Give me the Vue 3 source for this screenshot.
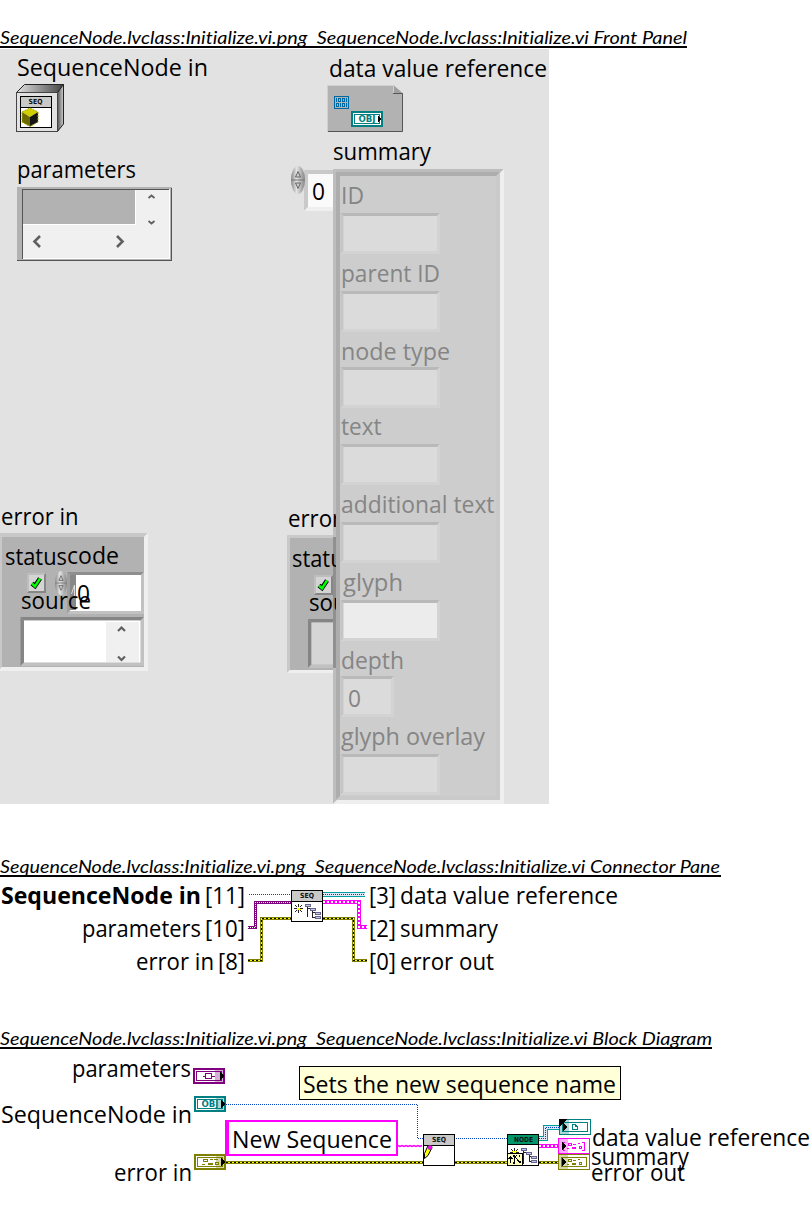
<script setup>
// Rows are [text, left, right, baseline]
const panelLabels = [
  ['SequenceNode in', 17, 208, 76.4],
  ['data value reference', 329, 547, 77.4],
  ['parameters', 17, 136, 178.4],
  ['summary', 333, 431, 160.4],
  ['error in', 1, 78.5, 525.4],
  ['status', 5, 67, 565],
  ['code', 67, 119, 564.4],
  ['0', 77, 90, 602.4],
  ['source', 21, 91, 609.4],
  ['0', 312, 325, 200.4]
]
const hiddenLabels = [
  ['error out', 288, 382, 527.4],
  ['status', 292, 354, 567.4],
  ['source', 309, 379, 611.4]
]
const clusterLabels = [
  ['ID', 341, 364, 204.4],
  ['parent ID', 341, 440, 282.4],
  ['node type', 341, 450, 360.4],
  ['text', 341, 381.5, 435.4],
  ['additional text', 341, 494.5, 513.4],
  ['glyph', 343, 403, 591.4],
  ['depth', 341, 404, 669.4],
  ['0', 348, 361, 707.4],
  ['glyph overlay', 341, 485, 745.4]
]
const connectorLabels = [
  ['[11]', 205, 245, 904.4],
  ['parameters', 82, 201, 937.4],
  ['[10]', 205, 245, 937.4],
  ['error in', 136, 214, 970.4],
  ['[8]', 218, 245, 970.4],
  ['[3]', 369, 396, 904.4],
  ['data value reference', 400, 618, 904.4],
  ['[2]', 369, 396, 937.4],
  ['summary', 400, 498, 937.4],
  ['[0]', 369, 396, 970.4],
  ['error out', 400, 494, 970.4]
]
const diagramLabels = [
  ['parameters', 72, 191, 1077.4],
  ['SequenceNode in', 1, 192, 1123.4],
  ['error in', 114, 192, 1181.4],
  ['Sets the new sequence name', 303, 616, 1093.4],
  ['New Sequence', 232, 392, 1148.4],
  ['data value reference', 592, 810, 1146.4],
  ['summary', 591, 689, 1165.4],
  ['error out', 591, 685, 1181.4]
]

// Bevelled frame: x, y, width, height, edge, top colour, bottom/right colour, fill, left colour
function frame(x, y, w, h, b, dark, light, fill, left = dark) {
  const r = x + w
  const d = y + h
  return {
    top: `${x},${y} ${r},${y} ${r - b},${y + b} ${x + b},${y + b}`,
    side: `${x},${y} ${x + b},${y + b} ${x + b},${d - b} ${x},${d}`,
    br: `${r},${y} ${r},${d} ${x},${d} ${x + b},${d - b} ${r - b},${d - b} ${r - b},${y + b}`,
    ix: x + b, iy: y + b, iw: w - 2 * b, ih: h - 2 * b, dark, light, fill, left
  }
}
const errorFrames = [
  frame(-2, 533, 150, 138, 4, '#c8c8c8', '#efefef', '#b2b2b2'),
  frame(27, 573, 19, 20, 2, '#bebebe', '#868686', '#d4d4d4'),
  frame(67, 572, 77, 42, 3, '#8f8f8f', '#c1c1c1', '#ffffff', '#a0a0a0'),
  frame(20.5, 617, 123.500, 49, 3.5, '#858585', '#c1c1c1', '#ffffff'),
  frame(287, 535, 150, 138, 3, '#c9c9c9', '#efefef', '#b2b2b2'),
  frame(314, 575, 19, 20, 2, '#bebebe', '#868686', '#d4d4d4'),
  frame(308, 619, 124, 49, 3.5, '#858585', '#c1c1c1', '#d5d5d5')
]
const field = (y, w = 100, fill = '#dbdbdb') => frame(340.5, y, w - 0.5, 41, 3, '#b9b9b9', '#d3d3d3', fill, '#c5c5c5')
const clusterFrames = [
  frame(304, 170, 33, 41, 4, '#c9c9c9', '#efefef', '#fafafa'),
  frame(333, 169, 171, 635, 4, '#bdbdbd', '#efefef', '#adadad'),
  frame(336, 172, 164, 628, 4, '#adadad', '#cacaca', '#cdcdcd'),
  field(213), field(291), field(367), field(444), field(522),
  field(600, 100, '#ececec'), field(676, 54), field(754)
]
const checks = ['translate(31 577)', 'translate(318 579)']
const spinners = ['translate(298 180)', 'translate(61 583) scale(.86)']

const connectorWires = [
  { kind: 'object', d: 'M249 894.5H291' },
  { kind: 'params', d: 'M248 927.5H255.5V902.5H291' },
  { kind: 'error', d: 'M248 960.5H261.5V918.5H291' },
  { kind: 'ref', d: 'M323 894.5H365' },
  { kind: 'cluster', d: 'M323 902H359V927H367' },
  { kind: 'error', d: 'M323 918.5H353.5V960.5H367' }
]
const diagramWires = [
  { kind: 'object', d: 'M226 1104.5H417.5V1138.5H423' },
  { kind: 'object', d: 'M456 1138.5H507' },
  { kind: 'error', d: 'M226 1162.5H423' },
  { kind: 'error', d: 'M455 1162.5H507' },
  { kind: 'error', d: 'M539 1162.5H558' },
  { kind: 'ref', d: 'M539 1138.5H545.5V1127.5H560' },
  { kind: 'cluster', d: 'M539 1146H558' }
]
const zigzag = 'M398 1145.5' + 'l2 1l2 -1'.repeat(6)

const controls = [
  { at: 'translate(193 1068)', color: '#800080', shape: 'node' },
  { at: 'translate(194 1096)', color: '#008080', shape: 'obj' },
  { at: 'translate(194 1154)', color: '#808000', shape: 'bits' }
]
const indicators = [
  { at: 'translate(559 1119)', color: '#008080', shape: 'page' },
  { at: 'translate(558 1138)', color: '#ff00ff', shape: 'array' },
  { at: 'translate(558 1154)', color: '#808000', shape: 'bits' }
]
</script>

<template>
  <main class="page">
    <section class="part panel-part">
      <h2 class="title first">
        <svg width="687" height="18"><text x="0" y="16" textLength="687" lengthAdjust="spacingAndGlyphs">SequenceNode.lvclass:Initialize.vi.png&#160; SequenceNode.lvclass:Initialize.vi Front Panel</text></svg>
      </h2>
      <svg class="canvas panel" width="549" height="755" viewBox="0 49 549 755">
        <defs>
          <linearGradient id="metal"><stop offset="0" stop-color="#888" /><stop offset=".4" stop-color="#e4e4e4" /><stop offset="1" stop-color="#858585" /></linearGradient>
          <linearGradient id="side"><stop offset="0" stop-color="#555" /><stop offset="1" stop-color="#d0d0d0" /></linearGradient>
          <linearGradient id="lid"><stop offset="0" stop-color="#e2e2e2" /><stop offset="1" stop-color="#444" /></linearGradient>
          <clipPath id="uncovered"><path d="M286 500h50v180h-50z" /></clipPath>
        </defs>

        <!-- class object control -->
        <path d="M16.5 92.5L24.5 84.5H63.5L57.5 92.5z" fill="url(#lid)" stroke="#222" />
        <path d="M57.5 92.5L63.5 84.5V124L57.5 131.5z" fill="url(#side)" stroke="#222" />
        <g class="crisp">
          <rect x="16.5" y="92.5" width="41" height="39" fill="#e2e2e2" stroke="#444" />
          <rect x="20.5" y="96.5" width="31" height="31" fill="#fff" stroke="#000" />
          <path d="M21 97h30v10H21z" fill="#c9c9c9" /><path d="M21 107h30v1H21z" />
        </g>
        <text class="tiny" x="28.500" y="104" textLength="14" lengthAdjust="spacingAndGlyphs">SEQ</text>
        <path d="M22 112L30 108L38 112L30 117z" fill="#d0d000" />
        <path d="M22 112L30 117V126.500L22 122z" fill="#6a6a00" />
        <path d="M30 117L38 112V122L30 126.500z" fill="#151515" />
        <path d="M22 112L30 108L38 112V122L30 126.500L22 122z" fill="none" stroke="#a8a800" stroke-dasharray="2 1" />

        <!-- parameters scroll box -->
        <g class="crisp">
          <path d="M17 187H172V261H17z" fill="#b2b2b2" />
          <path d="M22 189H170V259H22z" fill="#f0f0f0" />
          <path d="M17 260.500H171.500V188" fill="none" stroke="#555" />
          <path d="M22.500 259V189.500H169" fill="none" stroke="#555" />
          <path d="M23 258.500H169.500V190" fill="none" stroke="#fff" />
          <path d="M23 190H135V224H23z" fill="#b2b2b2" />
          <path d="M23 224.500H135.500V190" fill="none" stroke="#fff" />
        </g>
        <path class="arrow small" d="M148.500 198l3-2.500 3 2.500M148.500 221l3 2.500 3-2.500" />
        <path class="arrow" d="M40 236l-5.500 5.500 5.500 5.500M117 236l5.500 5.500-5.500 5.500" />

        <!-- data value reference control -->
        <path d="M327.500 85H393l10 8V132H327.500z" fill="#b2b2b2" />
        <path d="M393.500 85v8.500H402.500z" fill="#a0a0a0" />
        <path d="M394 85h9v8z" fill="#e2e2e2" />
        <path d="M327.500 131V85.500H393.500V93" fill="none" stroke="#d0d0d0" />
        <path d="M393 93.500H402.500V131.500H328" fill="none" stroke="#555" />
        <g class="crisp" fill="none" stroke="#0068a0">
          <path d="M334.500 96.500h14v12h-14z" />
          <path d="M336.500 98v4M338.500 98.500h2v3h-2zM342.500 98.500h2v3h-2zM346.500 98v4M336.500 103.500h2v3h-2zM340.500 103v4M342.500 103.500h2v3h-2zM346.500 103v4" />
        </g>
        <g transform="translate(351 111)" class="crisp">
          <path d="M1 1h30v14H1z" fill="#fff" stroke="#008080" stroke-width="2" />
          <path d="M3.500 3.500h25v9h-25z" fill="none" stroke="#008080" />
          <path d="M27 5l4 3-4 3z" /><text class="obj" x="7.500" y="11" textLength="17" lengthAdjust="spacingAndGlyphs">OBJ</text>
        </g>

        <!-- error clusters -->
        <g v-for="(f, i) in errorFrames" :key="i">
          <polygon :points="f.top" :fill="f.dark" /><polygon :points="f.side" :fill="f.left" /><polygon :points="f.br" :fill="f.light" />
          <rect :x="f.ix" :y="f.iy" :width="f.iw" :height="f.ih" :fill="f.fill" />
        </g>
        <path d="M70 575h6v35h-6z" fill="#888" />
        <path d="M71.500 594l3-9v13" stroke="#ddd" fill="none" />
        <path d="M106 622h33v40h-33z" fill="#f0f0f0" />
        <path class="arrow mid" d="M118 631l3.500-3.500 3.500 3.500M118 656.500l3.500 3.500 3.500-3.500" />
        <g v-for="c in checks" :key="c" :transform="c">
          <path d="M1 6.500L4 9L9 1.500" fill="none" stroke="#000" stroke-width="4.500" />
          <path d="M1 6.500L4 9.300L9 1.500" fill="none" stroke="#0f0" stroke-width="2.500" />
        </g>

        <!-- summary array -->
        <g v-for="(f, i) in clusterFrames" :key="'c' + i">
          <polygon :points="f.top" :fill="f.dark" /><polygon :points="f.side" :fill="f.left" /><polygon :points="f.br" :fill="f.light" />
          <rect :x="f.ix" :y="f.iy" :width="f.iw" :height="f.ih" :fill="f.fill" />
        </g>
        <path d="M333 537h3v131h-3z" fill="#909090" />
        <g clip-path="url(#uncovered)">
          <text v-for="l in hiddenLabels" :key="l[0]" class="label" :x="l[1]" :y="l[3]" :textLength="l[2] - l[1]" lengthAdjust="spacingAndGlyphs">{{ l[0] }}</text>
        </g>
        <g v-for="s in spinners" :key="s" :transform="s">
          <ellipse rx="7" ry="14" fill="url(#metal)" />
          <path d="M-6.500 0H6.500" stroke="#777" />
          <path d="M-2.500 -3L0 -8.500L2.500 -3z" fill="#ccc" stroke="#666" />
          <path d="M-2.500 3L0 8.500L2.500 3z" fill="#ccc" stroke="#666" />
        </g>
        <text v-for="(l, i) in panelLabels" :key="'p' + i" class="label" :x="l[1]" :y="l[3]" :textLength="l[2] - l[1]" lengthAdjust="spacingAndGlyphs">{{ l[0] }}</text>
        <text v-for="l in clusterLabels" :key="l[0]" class="label dim" :x="l[1]" :y="l[3]" :textLength="l[2] - l[1]" lengthAdjust="spacingAndGlyphs">{{ l[0] }}</text>
      </svg>
    </section>

    <section class="part connector-part">
      <h2 class="title">
        <svg width="721" height="18"><text x="0" y="16" textLength="720" lengthAdjust="spacingAndGlyphs">SequenceNode.lvclass:Initialize.vi.png&#160; SequenceNode.lvclass:Initialize.vi Connector Pane</text></svg>
      </h2>
      <svg class="canvas" width="812" height="103" viewBox="0 877 812 103">
        <g v-for="w in connectorWires" :key="w.d" :class="['wire', w.kind]">
          <path class="edge" :d="w.d" /><path class="core" :d="w.d" /><path class="dash" :d="w.d" />
        </g>
        <g class="crisp" transform="translate(291 890)">
          <rect x=".5" y=".5" width="31" height="31" fill="#fff" stroke="#000" />
          <path d="M1 1h30v10H1z" fill="#c9c9c9" /><path d="M1 11h30v1H1z" />
          <path d="M5.500 17.500h4v3h-4z" fill="#ff0" /><path d="M3 18.500h3M9 18.500h3M7.500 14v3M7.500 20v3M4 15l2 2M11 15l-2 2M4 22l2-2M11 22l-2-2" stroke="#222" />
          <path d="M16.500 17v10M17 18.500h3M21.500 20v7h3M21.500 22.500h3" fill="none" stroke="#222" />
          <g fill="#c5c5f0" stroke="#66668c"><path d="M14.500 14.500h5v2h-5zM19.500 18.500h5v2h-5zM24.500 22.500h5v2h-5zM24.500 26.500h5v2h-5z" /></g>
        </g>
        <text class="tiny" x="300" y="898" textLength="14" lengthAdjust="spacingAndGlyphs">SEQ</text>
        <text class="label bold" x="1" y="904.400" textLength="200" lengthAdjust="spacingAndGlyphs">SequenceNode in</text>
        <text v-for="(l, i) in connectorLabels" :key="i" class="label" :x="l[1]" :y="l[3]" :textLength="l[2] - l[1]" lengthAdjust="spacingAndGlyphs">{{ l[0] }}</text>
      </svg>
    </section>

    <section class="part diagram-part">
      <h2 class="title">
        <svg width="712" height="18"><text x="0" y="16" textLength="712" lengthAdjust="spacingAndGlyphs">SequenceNode.lvclass:Initialize.vi.png&#160; SequenceNode.lvclass:Initialize.vi Block Diagram</text></svg>
      </h2>
      <svg class="canvas" width="812" height="164" viewBox="0 1049 812 164">
        <g v-for="w in diagramWires" :key="w.d" :class="['wire', w.kind]">
          <path class="edge" :d="w.d" /><path class="core" :d="w.d" /><path class="dash" :d="w.d" />
        </g>
        <path :d="zigzag" fill="none" stroke="#f0f" stroke-width="1.400" />

        <g class="crisp">
          <rect x="299.500" y="1066.500" width="321" height="33" fill="#ffffd8" stroke="#000" />
          <rect x="226" y="1121" width="171" height="34" fill="#fff" stroke="#f0f" stroke-width="2" />
          <path d="M225 1120h4v36h-4z" fill="#f0f" />
        </g>

        <g v-for="t in controls" :key="t.at" :transform="t.at" class="crisp">
          <path d="M1 1h30v14H1z" fill="#fff" stroke-width="2" :stroke="t.color" />
          <path d="M3.500 3.500h25v9h-25z" fill="none" :stroke="t.color" />
          <g v-if="t.shape === 'node'" fill="none" :stroke="t.color"><path d="M12.500 5.500h6v5h-6zM10 8.500h3M19 8.500h3M12.500 6v5" /></g>
          <text v-if="t.shape === 'obj'" class="obj" x="7.500" y="11" textLength="17" lengthAdjust="spacingAndGlyphs">OBJ</text>
          <g v-if="t.shape === 'bits'" fill="none" :stroke="t.color"><path d="M9.500 5.500h4v2h-4zM16 5.500h3M20 5.500h4M8 10h3M14 10h5M21.500 8.500h3v2h-3zM14 9.500h5" /></g>
          <path d="M22 2h9v12h-9z" :fill="t.color" opacity=".32" />
          <path d="M27 4l4 4-4 4z" />
        </g>

        <g v-for="t in indicators" :key="t.at" :transform="t.at" class="crisp">
          <path d="M.5 .5h31v15H.5z" fill="#fff" :stroke="t.color" />
          <path v-if="t.shape !== 'array'" d="M3.500 3.500h25v9h-25z" fill="none" :stroke="t.color" />
          <path v-else d="M7 4.500H5.500v8H7M24 4.500h2.500v8H24" fill="none" :stroke="t.color" />
          <path v-if="t.shape === 'page'" d="M13.500 5.500h3l2 2v3h-5zM16.500 5.500v2h2" fill="none" :stroke="t.color" />
          <g v-else fill="none" :stroke="t.color"><path d="M10.500 5.500h3v2h-3zM15 6.500h3M20 5.500h2M9 10.500h2M14 9.500h4M14 10.500h4M21.500 8.500h2v2h-2z" /></g>
          <path d="M1 1h9v14H1z" :fill="t.color" opacity=".32" />
          <path d="M4 4l4 4-4 4z" />
          <path v-if="t.shape === 'page'" d="M0 0h8L0 8z" />
        </g>

        <g class="crisp" transform="translate(423 1134)">
          <rect x=".5" y=".5" width="31" height="31" fill="#fff" stroke="#000" />
          <path d="M1 1h30v10H1z" fill="#c9c9c9" /><path d="M1 11h30v1H1z" />
        </g>
        <path d="M424.500 1153.500l3.500-8 4 2-4 8-3.500 3z" fill="#ff0" stroke="#000" />
        <circle cx="430" cy="1147.500" r="2.200" fill="#f0f" stroke="#555" stroke-width=".5" />
        <text class="tiny" x="432" y="1142" textLength="14" lengthAdjust="spacingAndGlyphs">SEQ</text>

        <g class="crisp" transform="translate(507 1134)">
          <rect x=".5" y=".5" width="31" height="31" fill="#fff" stroke="#000" />
          <path d="M1 1h30v9H1z" fill="#00966a" /><path d="M1 10h30v1H1z" />
          <path d="M5 17h5v2H5z" fill="#ff0" /><path d="M3 18.500h3M9 18.500h3M4 15l2 2M11 15l-2 2M7.500 14v3" stroke="#222" fill="none" />
          <rect x=".5" y="19.500" width="15" height="12" fill="#ffffbd" stroke="#000" />
          <path d="M3.500 29v-6M1.500 25l2-2 2 2M10 21l-3 4v4M9 24l4 5M12.500 21v2" fill="none" stroke="#000" />
          <path d="M6 21h2v2H6zM12 27h2v2h-2zM6 28h2v2H6z" />
          <path d="M16.500 17v13M17 18.500h3M22.500 20v7h2M22.500 22.500h2" fill="none" stroke="#222" />
          <g fill="#c5c5f0" stroke="#66668c"><path d="M14.500 14.500h5v2h-5zM19.500 18.500h5v2h-5zM24.500 22.500h5v2h-5zM24.500 26.500h5v2h-5z" /></g>
        </g>
        <text class="tiny" x="514" y="1142" textLength="19" lengthAdjust="spacingAndGlyphs">NODE</text>
        <text v-for="l in diagramLabels" :key="l[0]" class="label" :x="l[1]" :y="l[3]" :textLength="l[2] - l[1]" lengthAdjust="spacingAndGlyphs">{{ l[0] }}</text>
      </svg>
    </section>
  </main>
</template>

<style scoped>
.page { width: 812px; height: 1213px; background: #fff; overflow: hidden; display: flex; flex-direction: column; }
.part { display: flex; flex-direction: column; align-items: flex-start; }
.panel-part { padding-top: 28px; }
.connector-part { padding-top: 53px; }
.diagram-part { padding-top: 49px; }
.title { margin: 0; border-bottom: 2px solid #000; font: italic 400 18px Lato, sans-serif; font-variant-ligatures: none; display: flex; }
.title.first { margin-bottom: 1px; }
.title svg { overflow: hidden; display: block; }
.canvas { display: block; }
.panel { background: #e2e2e2; }
.label { font: 400 23px "Open Sans", "Noto Sans", sans-serif; fill: #000; }
.bold { font-weight: 700; }
.dim { fill: #858585; }
.tiny { font: 700 7px "DejaVu Sans", sans-serif; fill: #111; }
.obj { font: 700 8px "DejaVu Sans", sans-serif; fill: #008080; }
.crisp { shape-rendering: crispEdges; }
.arrow { fill: none; stroke: #606060; stroke-width: 2.6; }
.arrow.small { stroke-width: 1.8; }
.arrow.mid { stroke-width: 2.2; }
.wire { fill: none; shape-rendering: crispEdges; }
.object .edge, .object .core { stroke: none; }
.object .dash { stroke: #0040c0; stroke-dasharray: 1 1; }
.params .edge { stroke: #800080; stroke-width: 3; }
.params .dash { stroke: #fff; stroke-dasharray: 1 1; }
.error .edge { stroke: #808000; stroke-width: 3; }
.error .core { stroke: #ff0; }
.error .dash { stroke: #000; stroke-dasharray: 2 2; }
.ref .edge { stroke: #00a0a0; stroke-width: 5; }
.ref .core { stroke: #e0e8f8; stroke-width: 3; }
.ref .dash { stroke: #0040c0; stroke-dasharray: 1 1; }
.cluster .edge { stroke: #f0f; stroke-width: 4; }
.cluster .dash { stroke: #fff; stroke-width: 2; stroke-dasharray: 2 2; shape-rendering: auto; }
</style>

<style>
body { background: #fff; }
</style>
